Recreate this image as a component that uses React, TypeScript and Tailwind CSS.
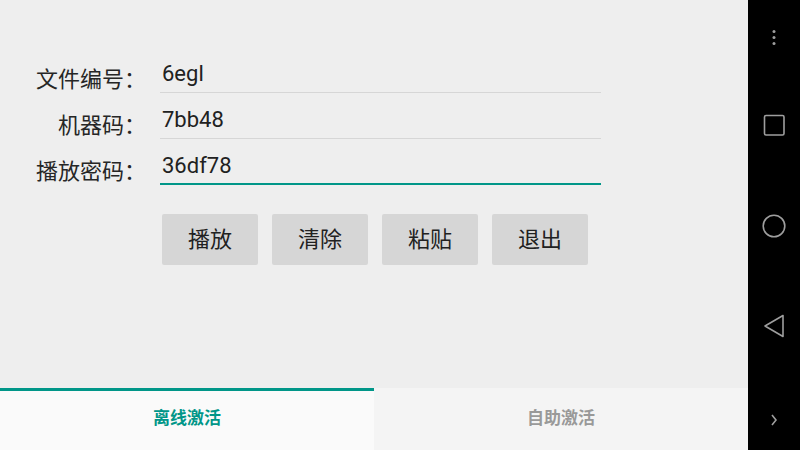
import React from "react";

const font = { fontFamily: "Roboto, 'Noto Sans CJK SC', sans-serif" };

const fields = [
  { label: "文件编号：", value: "6egl", active: false },
  { label: "机器码：", value: "7bb48", active: false },
  { label: "播放密码：", value: "36df78", active: true },
];

const buttons = ["播放", "清除", "粘贴", "退出"];

function NavBar() {
  return (
    <div className="w-[52px] h-full bg-black flex flex-col items-center">
      {/* 菜单点 */}
      <svg width="6" height="16" viewBox="0 0 6 16" className="mt-[30px]">
        <circle cx="3" cy="1.5" r="1.5" fill="#9e9e9e" />
        <circle cx="3" cy="7.5" r="1.5" fill="#9e9e9e" />
        <circle cx="3" cy="13.5" r="1.5" fill="#9e9e9e" />
      </svg>
      <svg width="24" height="24" viewBox="0 0 24 24" className="mt-[67px]">
        <rect x="2.5" y="2.5" width="19.5" height="19.5" rx="1.5" fill="none" stroke="#9e9e9e" strokeWidth="1.6" />
      </svg>
      <svg width="26" height="26" viewBox="0 0 26 26" className="mt-[76px]">
        <circle cx="13" cy="13" r="10.8" fill="none" stroke="#9e9e9e" strokeWidth="1.6" />
      </svg>
      <svg width="24" height="26" viewBox="0 0 24 26" className="mt-[74px]">
        <path d="M3 13 L21 2.5 L21 23.5 Z" fill="none" stroke="#9e9e9e" strokeWidth="1.6" strokeLinejoin="round" />
      </svg>
      <svg width="8" height="12" viewBox="0 0 8 12" className="mt-[75px]">
        <path d="M2 1 L6 6 L2 11" fill="none" stroke="#9e9e9e" strokeWidth="1.6" />
      </svg>
    </div>
  );
}

export default function App() {
  return (
    <div className="w-[800px] h-[450px] flex overflow-hidden" style={font}>
      <div className="w-[748px] h-full flex flex-col bg-[#eeeeee]">
        <div className="flex-1 flex flex-col pt-[47px]">
          {fields.map((f) => (
            <div key={f.label} className="flex items-end h-[46px]">
              <div className="w-[146px] text-right text-[22px] leading-[26px] text-[#262626]">
                {f.label}
              </div>
              <div
                className={
                  f.active
                    ? "ml-[14px] w-[441px] h-full flex items-end border-b-2 border-[#009688] pb-[4px]"
                    : "ml-[14px] w-[441px] h-full flex items-end border-b border-[#d6d6d6] pb-[5px]"
                }
              >
                <span className="pl-[2px] text-[22px] leading-[26px] text-[#212121]">{f.value}</span>
              </div>
            </div>
          ))}

          <div className="flex gap-[14px] ml-[162px] mt-[29px]">
            {buttons.map((b) => (
              <div
                key={b}
                className="w-[96px] h-[51px] rounded-[2px] bg-[#d6d6d6] flex items-center justify-center text-[22px] text-[#212121]"
              >
                {b}
              </div>
            ))}
          </div>
        </div>

        <div className="h-[62px] flex">
          <div className="flex-1 bg-[#fafafa] border-t-[3px] border-[#009688] flex items-center justify-center pb-[3px]">
            <span className="text-[17px] font-bold text-[#009688]">离线激活</span>
          </div>
          <div className="flex-1 bg-[#f4f4f4] flex items-center justify-center">
            <span className="text-[17px] font-bold text-[#999999]">自助激活</span>
          </div>
        </div>
      </div>
      <NavBar />
    </div>
  );
}
